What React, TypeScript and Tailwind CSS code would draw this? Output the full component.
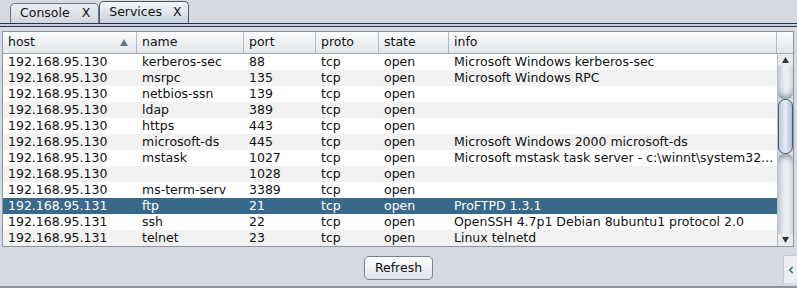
import { ChevronLeft } from "lucide-react";

type Row = {
  host: string;
  name: string;
  port: string;
  proto: string;
  state: string;
  info: string;
};

const rows: Row[] = [
  { host: "192.168.95.130", name: "kerberos-sec", port: "88", proto: "tcp", state: "open", info: "Microsoft Windows kerberos-sec" },
  { host: "192.168.95.130", name: "msrpc", port: "135", proto: "tcp", state: "open", info: "Microsoft Windows RPC" },
  { host: "192.168.95.130", name: "netbios-ssn", port: "139", proto: "tcp", state: "open", info: "" },
  { host: "192.168.95.130", name: "ldap", port: "389", proto: "tcp", state: "open", info: "" },
  { host: "192.168.95.130", name: "https", port: "443", proto: "tcp", state: "open", info: "" },
  { host: "192.168.95.130", name: "microsoft-ds", port: "445", proto: "tcp", state: "open", info: "Microsoft Windows 2000 microsoft-ds" },
  { host: "192.168.95.130", name: "mstask", port: "1027", proto: "tcp", state: "open", info: "Microsoft mstask task server - c:\\winnt\\system32..." },
  { host: "192.168.95.130", name: "", port: "1028", proto: "tcp", state: "open", info: "" },
  { host: "192.168.95.130", name: "ms-term-serv", port: "3389", proto: "tcp", state: "open", info: "" },
  { host: "192.168.95.131", name: "ftp", port: "21", proto: "tcp", state: "open", info: "ProFTPD 1.3.1" },
  { host: "192.168.95.131", name: "ssh", port: "22", proto: "tcp", state: "open", info: "OpenSSH 4.7p1 Debian 8ubuntu1 protocol 2.0" },
  { host: "192.168.95.131", name: "telnet", port: "23", proto: "tcp", state: "open", info: "Linux telnetd" },
];

const selected = 9;

function Tab({ label, active }: { label: string; active?: boolean }) {
  return (
    <div
      className={
        active
          ? "h-[22px] pl-[9px] pr-[6px] flex items-center gap-[11px] rounded-t-[5px] border border-b-0 border-[#4f5a66] bg-gradient-to-b from-[#f4f6f9] to-[#c9d3de]"
          : "h-[20px] pl-[9px] pr-[8px] flex items-center gap-[12px] rounded-t-[5px] border border-b-0 border-[#6d7782] bg-gradient-to-b from-[#eceef1] to-[#d3d7dd]"
      }
    >
      <span>{label}</span>
      <span>X</span>
    </div>
  );
}

function HeaderCell({ label, width, sort }: { label: string; width: string; sort?: boolean }) {
  return (
    <div className={`${width} h-full flex items-center justify-between pl-[5px] pr-[8px] border-r border-[#b3b8be]`}>
      <span>{label}</span>
      {sort && (
        <svg width="8" height="7" viewBox="0 0 8 7">
          <path d="M4 0 L8 7 L0 7 Z" fill="#5f7a96" />
        </svg>
      )}
    </div>
  );
}

export default function App() {
  return (
    <div className="w-[797px] h-[288px] overflow-hidden bg-[#d6d9df] text-[#111] text-[12.5px] leading-none font-['DejaVu_Sans',sans-serif] flex flex-col">
      {/* tabs */}
      <div className="h-[23px] flex items-end pl-[10px]">
        <Tab label="Console" />
        <Tab label="Services" active />
      </div>
      <div className="h-[4px] border-t border-b border-[#26364a] bg-[#c7ced8]" />

      {/* table */}
      <div className="mt-[4px] ml-[2px] w-[792px] border border-[#8e959d] bg-white">
        <div className="h-[22px] flex border-b border-[#a3a9b0] bg-gradient-to-b from-[#fafbfc] to-[#e3e6ea]">
          <HeaderCell label="host" width="w-[134px]" sort />
          <HeaderCell label="name" width="w-[107px]" />
          <HeaderCell label="port" width="w-[72px]" />
          <HeaderCell label="proto" width="w-[63px]" />
          <HeaderCell label="state" width="w-[70px]" />
          <HeaderCell label="info" width="w-[328px]" />
          <div className="flex-1" />
        </div>
        <div className="flex">
          <div className="w-[774px]">
            {rows.map((r, i) => {
              const sel = i === selected;
              const bg = sel ? "bg-[#39698a] text-white" : i % 2 === 0 ? "bg-white" : "bg-[#f2f2f2]";
              return (
                <div key={i} className={`h-[16px] leading-[16px] flex whitespace-nowrap ${bg}`}>
                  <div className="w-[134px] pl-[5px]">{r.host}</div>
                  <div className="w-[107px] pl-[5px]">{r.name}</div>
                  <div className="w-[72px] pl-[5px]">{r.port}</div>
                  <div className="w-[63px] pl-[5px]">{r.proto}</div>
                  <div className="w-[70px] pl-[5px]">{r.state}</div>
                  <div className="w-[328px] pl-[5px]">{r.info}</div>
                </div>
              );
            })}
          </div>
          {/* scrollbar */}
          <div className="flex-1 flex flex-col border-l border-[#b9bec5] bg-gradient-to-r from-[#c9ced5] via-[#eef0f3] to-[#d9dde2]">
            <div className="h-[12px] flex items-center justify-center bg-[#e9ecef]">
              <svg width="7" height="6" viewBox="0 0 7 6">
                <path d="M3.5 0 L7 6 L0 6 Z" fill="#333" />
              </svg>
            </div>
            <div className="h-[33px] rounded-b-[6px] shadow-[inset_0_-6px_6px_-4px_#7d8794]" />
            <div className="h-[55px] rounded-[7px] border border-[#4c5b6d] bg-gradient-to-r from-[#b8c7d8] via-[#e6edf4] to-[#aebfd2]" />
            <div className="flex-1 rounded-t-[6px] shadow-[inset_0_6px_6px_-4px_#7d8794]" />
            <div className="h-[12px] flex items-center justify-center bg-[#e9ecef]">
              <svg width="7" height="6" viewBox="0 0 7 6">
                <path d="M0 0 L7 0 L3.5 6 Z" fill="#333" />
              </svg>
            </div>
          </div>
        </div>
      </div>

      {/* bottom */}
      <div className="flex-1 relative flex justify-center items-start pt-[9px]">
        <button className="h-[24px] px-[10px] rounded-[5px] border border-[#7a838d] bg-gradient-to-b from-[#ffffff] to-[#e0e4e9] text-[#111] text-[12.5px]">
          Refresh
        </button>
        <div className="absolute right-0 top-[8px] w-[14px] h-[28px] bg-[#eceef1] border-l border-t border-[#c3c8ce] flex items-center justify-center">
          <ChevronLeft className="w-[10px] h-[10px] text-[#2f6cb0]" strokeWidth={4} />
        </div>
      </div>
      <div className="h-[2px] bg-[#8d939a]" />
    </div>
  );
}
